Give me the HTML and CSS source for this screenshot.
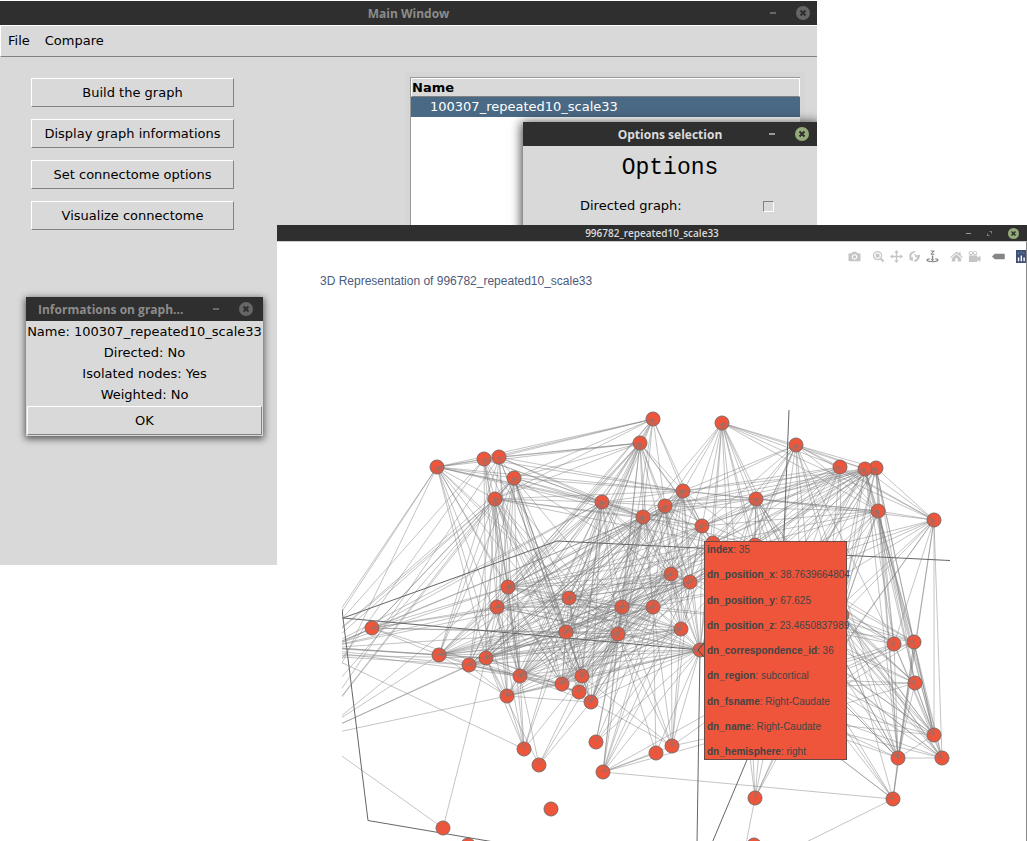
FILE: index.html
```html
<!DOCTYPE html>
<html lang="en">
<head>
<meta charset="utf-8">
<title>Main Window</title>
<link rel="stylesheet" href="styles.css">
</head>
<body>
<main class="desktop">
  <section class="window main-window" aria-label="Main Window">
    <header class="titlebar inactive">
      <h1 class="title">Main Window</h1>
      <div class="controls">
        <button class="minimize" aria-label="Minimize"></button>
        <button class="close" aria-label="Close"><svg viewBox="0 0 14 14"><path d="M4.5 4.5l5 5m0-5l-5 5"/></svg></button>
      </div>
    </header>
    <nav class="menubar">
      <button class="menu">File</button>
      <button class="menu">Compare</button>
    </nav>
    <div class="workspace">
      <div class="actions">
        <button class="push">Build the graph</button>
        <button class="push">Display graph informations</button>
        <button class="push">Set connectome options</button>
        <button class="push">Visualize connectome</button>
      </div>
      <div class="tree-frame">
        <table class="tree">
          <thead><tr><th>Name</th></tr></thead>
          <tbody><tr><td>100307_repeated10_scale33</td></tr></tbody>
        </table>
      </div>
    </div>

    <section class="window options-window" aria-label="Options selection">
      <header class="titlebar">
        <h2 class="title">Options selection</h2>
        <div class="controls">
          <button class="minimize" aria-label="Minimize"></button>
          <button class="close" aria-label="Close"><svg viewBox="0 0 14 14"><path d="M4.5 4.5l5 5m0-5l-5 5"/></svg></button>
        </div>
      </header>
      <h3 class="options-heading">Options</h3>
      <div class="option">
        <label for="directed">Directed graph:</label>
        <input id="directed" class="check" type="checkbox">
      </div>
    </section>
  </section>

  <section class="window info-window" aria-label="Informations on graph">
    <header class="titlebar inactive">
      <h2 class="title">Informations on graph...</h2>
      <div class="controls">
        <button class="minimize" aria-label="Minimize"></button>
        <button class="close" aria-label="Close"><svg viewBox="0 0 14 14"><path d="M4.5 4.5l5 5m0-5l-5 5"/></svg></button>
      </div>
    </header>
    <p class="info">Name: 100307_repeated10_scale33</p>
    <p class="info">Directed: No</p>
    <p class="info">Isolated nodes: Yes</p>
    <p class="info">Weighted: No</p>
    <button class="push ok">OK</button>
  </section>

  <section class="window plot-window" aria-label="996782_repeated10_scale33">
    <header class="titlebar slim">
      <h2 class="title">996782_repeated10_scale33</h2>
      <div class="controls">
        <button class="minimize" aria-label="Minimize"></button>
        <button class="restore" aria-label="Restore"><svg viewBox="0 0 6 6"><path d="M3 .5h2.500v2.500M.5 3v2.500H3"/></svg></button>
        <button class="close" aria-label="Close"><svg viewBox="0 0 14 14"><path d="M4.500 4.500l5 5m0-5l-5 5"/></svg></button>
      </div>
    </header>
    <div class="plot">
      <svg class="scene" viewBox="277 241 750 600" preserveAspectRatio="xMinYMin meet" role="img" aria-label="Connectome graph">
        <defs><clipPath id="scene-clip"><rect x="342" y="390" width="640" height="460"/></clipPath></defs>
        <g clip-path="url(#scene-clip)">
          <path id="edges" class="edges"/>
          <path class="axes" d="M342 609L343 618L557 541L950 560.500M343 618L368 820.500L500 843M343 618L700 650L697 845M789 410L783 560M752 748L712 843"/>
          <g id="nodes" class="nodes"></g>
          <path id="stubs" class="stubs"/>
          <path class="pointer" d="M705 642L698 650L705 658Z"/>
        </g>
      </svg>
      <div class="modebar">
        <div class="tools"><button aria-label="Download plot"><svg viewBox="0 0 14 14"><path fill-rule="evenodd" d="M1.500 3.500h2.500l1-1.500h4l1 1.500h2.500q1 0 1 1v6.500q0 1-1 1h-11q-1 0-1-1v-6.500q0-1 1-1zM7 4.500a3 3 0 1 0 .01 0zM7 5.700a1.800 1.800 0 1 1-.01 0z"/></svg></button></div>
        <div class="tools">
          <button aria-label="Zoom"><svg viewBox="0 0 14 14"><path fill-rule="evenodd" d="M6 1a5 5 0 1 0 2.700 9.200l3 3 1.500-1.500-3-3A5 5 0 0 0 6 1zm0 1.300a3.700 3.700 0 1 1-.01 0zM4 4h4v4H4z"/></svg></button>
          <button aria-label="Pan"><svg viewBox="0 0 14 14"><path d="M7 0l2.500 3H7.700v3.300H11V4.500L14 7l-3 2.500V7.700H7.700V11h1.800L7 14l-2.500-3h1.800V7.700H3v1.800L0 7l3-2.500v1.800h3.300V3H4.500z"/></svg></button>
          <button aria-label="Orbital rotation"><svg viewBox="0 0 14 14"><path d="M2 9C0 5 3 1 8 1l-1 2C4 3.500 2.800 6 4 8l1.500-.5L5 12 1 10zM6 5c2-1 3 0 3 1l4-1c0 4-2 7-6 8l-.500-2c2-.5 3-2 3.500-3.500L8 8C8 6 7.500 5.500 6 5z"/></svg></button>
          <button class="active" aria-label="Turntable rotation"><svg viewBox="0 0 14 14"><path d="M5 .5h4v1L6.500 4H9v1H5V4l2.500-2.500H5zM6.300 6h1.500v4H9l-2 2-2-2h1.300zM4 9C0 9.500 0 11 1 12q6 2.500 12 0c1-1 1-2.500-3-3v1q3 .7 1.500 1.300-4.500 1.500-9 0Q1 10.700 4 10z"/></svg></button>
        </div>
        <div class="tools">
          <button aria-label="Reset camera to default"><svg viewBox="0 0 14 14"><path d="M7 1.500l2.500 2.300V2.500h2v3.200L14 8l-.7.700L7 3.500.7 8.700 0 8zM7 4.700l5 4.200v3.600H8.300V9H5.700v3.500H2V8.900z"/></svg></button>
          <button aria-label="Reset camera to last save"><svg viewBox="0 0 14 14"><path fill-rule="evenodd" d="M3 1a2.300 2.300 0 1 0 .01 0zM7.500 1a2.300 2.300 0 1 0 .01 0zM1 6h9v2l3.500-1.500v6L10 11v2H1zM3 1.900a1.300 1.300 0 1 1-.01 0zM7.500 1.900a1.300 1.300 0 1 1-.01 0z"/></svg></button>
        </div>
        <div class="tools"><button class="active" aria-label="Toggle show closest data on hover"><svg viewBox="0 0 14 14"><path d="M0 7l3-3h10q.7 0 .7.700v4.600q0 .7-.7.700H3z"/></svg></button></div>
        <div class="tools"><button aria-label="Produced with Plotly"><svg viewBox="0 0 14 14"><path fill="#3f4f75" d="M0 0h14v14H0z"/><path fill="#80cfbe" d="M2 3h1v1H2zM5 2h1v1H5zM8 3h1v1H8zM11 2h1v1h-1z"/><path fill="#fff" d="M2 8h1.500v4H2zM5 6h1.500v6H5zM8 8h1.500v4H8zM11 6h1.500v6H11z"/></svg></button></div>
      </div>
      <h3 class="plot-title">3D Representation of 996782_repeated10_scale33</h3>
      <dl class="hover">
        <div><dt>index</dt><dd>: 35</dd></div>
        <div><dt>dn_position_x</dt><dd>: 38.7639664804</dd></div>
        <div><dt>dn_position_y</dt><dd>: 67.625</dd></div>
        <div><dt>dn_position_z</dt><dd>: 23.4650837989</dd></div>
        <div><dt>dn_correspondence_id</dt><dd>: 36</dd></div>
        <div><dt>dn_region</dt><dd>: subcortical</dd></div>
        <div><dt>dn_fsname</dt><dd>: Right-Caudate</dd></div>
        <div><dt>dn_name</dt><dd>: Right-Caudate</dd></div>
        <div><dt>dn_hemisphere</dt><dd>: right</dd></div>
      </dl>
    </div>
  </section>
</main>
<script src="graph.js"></script>
</body>
</html>
```
FILE: styles.css
```css
* { box-sizing: border-box; }
body {
  margin: 0;
  background: #fff;
  color: #000;
  font: 13px/16px "DejaVu Sans", sans-serif;
}
h1, h2, h3, p, dl, dd { margin: 0; }
button { font: inherit; color: inherit; padding: 0; border: 0; background: none; }

.desktop { position: relative; height: 100vh; overflow: hidden; }
.window { position: absolute; background: #d9d9d9; }
.main-window { left: 0; top: 1px; width: 817px; height: 564px; overflow: hidden; }
.options-window { left: 523px; top: 121px; right: 0; bottom: 0; box-shadow: 0 2px 10px 2px rgba(0, 0, 0, .7); }
.info-window {
  left: 26px; top: 297px; width: 237px;
  padding-bottom: 1px;
  box-shadow: 0 2px 7px 1px rgba(0, 0, 0, .6);
}
.plot-window { left: 277px; top: 225px; right: 0; bottom: 0; display: flex; flex-direction: column; background: #fff; }

.titlebar {
  display: grid;
  grid-template-columns: 1fr auto 1fr;
  align-items: center;
  height: 24px;
  background: #2f2f2f;
  color: #dcdcdc;
}
.titlebar.inactive { color: #8c8c8c; }
.title { grid-column: 2; padding-top: 2px; font: 700 12px/20px "Open Sans", "Noto Sans", sans-serif; white-space: nowrap; }
.controls { display: flex; align-items: center; justify-content: flex-end; gap: 20px; padding-right: 7px; }
.minimize { width: 6px; height: 2px; background: #999; }
.close { width: 14px; height: 14px; border-radius: 50%; background: #94ab79; }
.close svg { display: block; width: 100%; height: 100%; fill: none; stroke: #2f2f2f; stroke-width: 2; }
.inactive .minimize { background: #686868; }
.inactive .close { background: #666; }
.options-window .controls { padding-right: 8px; }
.info-window .titlebar { grid-template-columns: 12px auto 1fr; }
.info-window .controls { padding-right: 10px; }
.slim { height: 16px; flex: none; }
.slim .title { padding: 0; font-size: 10px; font-weight: 600; line-height: 16px; }
.slim .controls { gap: 16px; padding-right: 8px; }
.slim .minimize { width: 5px; height: 1px; }
.slim .close { width: 11px; height: 11px; }
.restore svg { display: block; width: 5px; height: 5px; fill: none; stroke: #999; }

.menubar {
  display: flex;
  gap: 15px;
  height: 32px;
  padding: 0 7px;
  border: 1px solid #fff;
  border-right: 0;
  border-bottom-color: #828282;
}
.workspace { display: flex; justify-content: space-between; padding: 15px 12px 0 31px; }
.actions { display: flex; flex-direction: column; gap: 12px; width: 203px; padding-top: 6px; }
.push {
  height: 29px;
  border: 1px solid #fff;
  border-right-color: #828282;
  border-bottom-color: #828282;
}
.tree-frame { width: 400px; height: 400px; padding: 5px; background: #d5d5d5; }
.tree { width: 100%; height: 100%; border-collapse: separate; border-spacing: 0; border: 1px solid #999; border-right: 0; background: #fff; }
.tree th {
  height: 19px;
  padding: 0;
  border: 1px solid #fff;
  border-bottom-color: #828282;
  background: #d9d9d9;
  text-align: left;
}
.tree tbody { vertical-align: top; }
.tree td { height: 20px; padding: 0 19px; line-height: 20px; background: linear-gradient(#4a6984 20px, #fff 20px); color: #fff; }

.options-heading { padding: 6px 0 5px; text-align: center; font: 23px/32px "Liberation Mono", monospace; }
.option { display: flex; justify-content: space-between; align-items: center; padding: 9px 43px 0 57px; }
.check { appearance: none; width: 11px; height: 11px; margin: 0; border: 1px solid #828282; border-right-color: #fff; border-bottom-color: #fff; }

.info { line-height: 21px; text-align: center; white-space: nowrap; }
.ok { display: block; width: calc(100% - 2px); margin: 1px 1px 0; }

.plot { position: relative; flex: 1; overflow: hidden; border-top: 1px solid #ccc; border-right: 1px solid #888; font-family: "Liberation Sans", sans-serif; }
.scene { position: absolute; left: 0; top: -1px; width: 750px; height: 600px; }
.edges, .stubs { fill: none; stroke: #7d7d7d; stroke-width: 1; }
.edges { stroke-opacity: .45; }
.stubs { stroke-opacity: .22; }
.axes { fill: none; stroke: #666; stroke-width: 1; }
.nodes circle { fill: #ef553b; stroke: #7d6a66; stroke-width: 1; }
.pointer { fill: #ef553b; stroke: #444; }
.modebar { position: relative; display: flex; justify-content: flex-end; gap: 6px; margin-right: -5px; padding-top: 5px; }
.tools { display: flex; }
.tools button { display: grid; place-items: center; width: 18px; height: 18px; }
.tools svg { width: 13px; height: 13px; fill: #c5c5c5; }
.tools .active svg { fill: #858585; }
.plot-title { position: relative; margin: 8px 43px; font-size: 12px; line-height: 16px; font-weight: 400; color: #4a5b7d; }
.hover {
  position: absolute; left: 427px; top: 299px;
  display: flex; flex-direction: column; justify-content: space-between;
  width: 143px; height: 219px;
  padding: 1px 2px;
  border: 1px solid #6c4a43;
  background: #ef553b;
  color: #444;
  font-size: 10px;
  line-height: 13px;
  white-space: nowrap;
}
.hover dt { display: inline; font-weight: 700; }
.hover dd { display: inline; }
```
FILE: graph.js
```js
const visible = [
  [653,419],[640,443],[722,423],[796,445],[484,459],[499,457],[437,467],[514,478],[495,499],[602,502],
  [683,491],[665,506],[643,517],[702,526],[756,499],[840,467],[876,468],[865,469],[878,511],[934,520],
  [713,543],[755,545],[671,574],[690,582],[508,587],[497,607],[569,598],[622,607],[653,607],[566,632],
  [618,634],[681,629],[372,628],[439,655],[469,665],[486,658],[520,676],[507,696],[562,684],[582,676],
  [579,692],[591,702],[524,749],[539,765],[596,742],[603,772],[656,753],[672,746],[551,809],[443,828],
  [468,845],[755,798],[754,845],[700,650],[842,615],[894,644],[914,642],[915,683],[934,735],[942,758],
  [898,758],[893,799]
];

// Nodes outside the clipped scene or behind the hover label.
const unseen = {
  a: [250,619], b: [280,712], c: [250,642], d: [310,738], e: [325,648], f: [300,750], g: [740,875],
  h: [730,590], i: [770,620], j: [800,580], k: [820,680], l: [750,690], m: [790,720], n: [310,655],
  o: [312,657], p: [270,760]
};

// Every source on the left is linked to every target on the right.
const links = [
  ["0", "4 5 6 7 8 9 10 11 12 13 24 29 1 25 26 27"],
  ["1", "4 5 6 7 8 9 10 11 12 13 22 23 24 25 26 27 28 29 30 35 36 38 33 20"],
  ["2", "10 11 13 14 15 3 17 18 19 20 21 22 12 h i j 53 l k"],
  ["3", "10 12 13 14 15 16 17 18 19 20 21 h i j k 53 54 60 55"],
  ["4", "6 8 9 10 12 25 35 36 29 30 24 n p"],
  ["5", "7 8 9 10 12 0 24 33 36 29 39 f"],
  ["6", "5 7 8 9 10 12 13 24 26 29 30 36 37 38 35 o n f"],
  ["7", "8 9 10 12 22 24 25 26 27 29 36 38 39 41 n f p"],
  ["8", "9 10 12 13 20 24 25 26 29 30 33 35 36 37 38 e n f"],
  ["9", "10 11 12 13 14 22 23 24 25 26 27 28 29 30 31 33 35 36 37 38 39 40 e f"],
  ["10 11 12 13", "9 22 23 26 27 28 30 31 53 24 29 14 20 38 36"],
  ["10 11", "17 18 15 21 h 34 35 41"],
  ["12", "33 34 35 39 40 41 25 16 45 e"],
  ["14", "15 16 17 18 20 21 h i j k 13 53 22 23 19 l"],
  ["15 16 17", "14 18 19 21 20 h i j k 54 13 23 53"],
  ["16 17", "55 56 58 60 l 57"],
  ["18", "19 20 21 13 h i j k l m 54 55 56 57 60 58 59"],
  ["19", "h i j k l m 54 55 61 58 59 14 15 60 23"],
  ["20 21", "22 23 53 27 28 31 30 26 12 39 54 24 29"],
  ["22 23 27 28 31 30", "24 25 26 29 33 35 36 38 39 41"],
  ["22 31 30 53", "34 37 40"],
  ["22 27 28", "23 31 53 30 h i"],
  ["24 25 26 29", "9 10 11 12 13 1 31 e"],
  ["9 12 8 7 26", "32 34 33 40 41"],
  ["53", "24 25 26 29 30 31 33 36 38 39 41 44 45 46 47 h i 23 34"],
  ["24 25 26 29", "33 34 35 36 37 38 39"],
  ["32", "25 24 33 29 26 30 12 36 o n"],
  ["33", "34 35 36 37 c e"],
  ["34 35", "36 37 38 40 c n"],
  ["36", "37 38 39 40 41 c"],
  ["33 34 35 37", "d"],
  ["37", "38 39 41 29 30"],
  ["38 39 40", "41 30 31"],
  ["42", "a 35 36 24 25 26 39 29 37"],
  ["43", "36 39 35 41 30"],
  ["44", "30 27 31 28"],
  ["45", "30 31 28 27 22 23 53 46 47 l m 61"],
  ["46", "30 53 28"],
  ["47", "27 30 31 22 28 23 41 39 l m"],
  ["49", "35 b"],
  ["51", "h i j k l m 54 g"],
  ["54 55 56 57 58 59 60", "h i j k l m"],
  ["55 56 57", "54 60 58 21 18"],
  ["58 59 60", "18 54 55 56 57 14 21"],
  ["60", "59 58 3 17"],
  ["61", "60 56 h i k l m g 54"]
];

const at = id => unseen[id] || visible[id];
const seen = new Set();
let lines = "";
let stubs = "";

function stub([x1, y1], [x2, y2]) {
  const length = Math.hypot(x2 - x1, y2 - y1);
  const reach = 6 / length;
  stubs += `M${x1} ${y1}L${(x1 + (x2 - x1) * reach).toFixed(1)} ${(y1 + (y2 - y1) * reach).toFixed(1)}`;
}

for (const [sources, targets] of links) {
  for (const s of sources.split(" ")) {
    for (const t of targets.split(" ")) {
      const key = [s, t].sort().join("-");
      if (s === t || seen.has(key)) continue;
      seen.add(key);
      const p = at(s);
      const q = at(t);
      lines += `M${p}L${q}`;
      stub(p, q);
      if (!unseen[t]) stub(q, p);
    }
  }
}

document.getElementById("edges").setAttribute("d", lines);
document.getElementById("stubs").setAttribute("d", stubs);

const layer = document.getElementById("nodes");
for (const [x, y] of visible) {
  const dot = document.createElementNS("http://www.w3.org/2000/svg", "circle");
  dot.setAttribute("cx", x);
  dot.setAttribute("cy", y);
  dot.setAttribute("r", 7);
  layer.append(dot);
}
```
